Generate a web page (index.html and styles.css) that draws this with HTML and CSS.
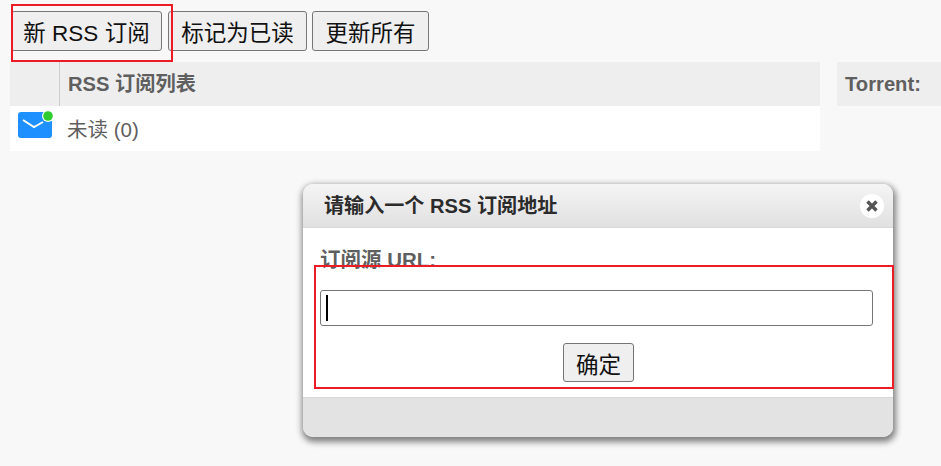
FILE: index.html
```html
<!DOCTYPE html>
<html lang="zh-CN">
<head>
    <meta charset="UTF-8">
    <title>RSS</title>
    <link rel="stylesheet" href="styles.css">
</head>
<body>
    <!-- Toolbar -->
    <div class="toolbar">
        <button class="btn btn-new">新 RSS 订阅</button>
        <button class="btn btn-read">标记为已读</button>
        <button class="btn btn-update">更新所有</button>
    </div>

    <div class="panes">
        <!-- Feed list -->
        <div class="feed-pane">
            <div class="feed-header">
                <div class="icon-col"></div>
                <div class="feed-title">RSS 订阅列表</div>
            </div>
            <div class="feed-row">
                <div class="icon-cell">
                    <svg class="mail-icon" width="36" height="28" viewBox="0 0 36 28">
                        <rect x="0" y="2" width="34" height="26" rx="3" fill="#1e90ff"/>
                        <path d="M5 10 L16 17 L25 12" fill="none" stroke="#fff" stroke-width="2"/>
                        <circle cx="30" cy="6" r="6" fill="#fff"/>
                        <circle cx="30" cy="6" r="4.800" fill="#2ecc2e"/>
                    </svg>
                </div>
                <div class="feed-name">未读 (0)</div>
            </div>
        </div>

        <!-- Torrent pane -->
        <div class="torrent-pane">
            <div class="torrent-header">Torrent:</div>
        </div>
    </div>

    <!-- Dialog -->
    <div class="dialog">
        <div class="dialog-head">
            <span class="dialog-title">请输入一个 RSS 订阅地址</span>
            <span class="dialog-close">
                <svg width="14" height="14" viewBox="0 0 14 14">
                    <path d="M2.500 2.500 L11.500 11.500 M11.500 2.500 L2.500 11.500" stroke="#555" stroke-width="3.400"/>
                </svg>
            </span>
        </div>
        <div class="dialog-body">
            <label class="url-label">订阅源 URL:</label>
            <div class="url-input"><span class="caret"></span></div>
            <div class="dialog-actions">
                <button class="btn btn-ok">确定</button>
            </div>
        </div>
        <div class="dialog-foot"></div>
    </div>

    <!-- Red annotation boxes -->
    <div class="mark mark-button"></div>
    <div class="mark mark-input"></div>
</body>
</html>
```

FILE: styles.css
```css
* {
    margin: 0;
    padding: 0;
    box-sizing: border-box;
}

body {
    width: 941px;
    height: 466px;
    overflow: hidden;
    position: relative;
    background-color: #f8f8f8;
    color: #5f5f5f;
    font-family: "Liberation Sans", "Noto Sans CJK SC", sans-serif;
}

.toolbar {
    display: flex;
    gap: 5px;
    padding: 11px 0 0 11px;
    height: 62px;
}

.btn {
    height: 40px;
    background-color: #efefef;
    border: 1px solid #767676;
    border-radius: 3px;
    color: #111;
    font-family: inherit;
    font-size: 22.500px;
}

.btn-new {
    width: 151px;
    margin-right: 1px;
}

.btn-read {
    width: 139px;
}

.btn-update {
    width: 117px;
}

.panes {
    display: flex;
    padding-left: 10px;
}

/* Feed list */
.feed-pane {
    width: 810px;
}

.feed-header {
    display: flex;
    height: 44px;
    background-color: #eeeeee;
}

.icon-col {
    width: 50px;
    border-right: 1px solid #cfcfcf;
}

.feed-title {
    padding-left: 8px;
    font-size: 20.200px;
    font-weight: bold;
    line-height: 44px;
}

.feed-row {
    display: flex;
    align-items: center;
    height: 45px;
    background-color: #fff;
}

.icon-cell {
    width: 50px;
    padding: 0 0 9px 8px;
}

.mail-icon {
    display: block;
}

.feed-name {
    padding: 0 0 2px 7px;
    font-size: 20.500px;
}

/* Torrent pane */
.torrent-pane {
    flex: 1;
    margin-left: 17px;
}

.torrent-header {
    height: 44px;
    padding-left: 8px;
    background-color: #eeeeee;
    font-size: 20.200px;
    font-weight: bold;
    line-height: 44px;
}

/* Dialog */
.dialog {
    position: absolute;
    left: 303px;
    top: 184px;
    display: flex;
    flex-direction: column;
    width: 590px;
    height: 253px;
    border-radius: 10px;
    box-shadow: 1px 3px 6px 2px #808080;
}

.dialog-head {
    display: flex;
    justify-content: space-between;
    align-items: center;
    height: 44px;
    padding: 0 9px 0 21px;
    border-radius: 10px 10px 0 0;
    background: linear-gradient(#f5f5f5, #e0e0e0);
    border-bottom: 1px solid #d8d8d8;
}

.dialog-title {
    padding-bottom: 2px;
    color: #2b2b2b;
    font-size: 20.100px;
    font-weight: bold;
}

.dialog-close {
    display: flex;
    align-items: center;
    justify-content: center;
    width: 24px;
    height: 24px;
    border-radius: 50%;
    background-color: #fff;
}

.dialog-close svg {
    display: block;
}

.dialog-body {
    flex: 1;
    padding: 19px 20px 0 17px;
    background-color: #fff;
}

.url-label {
    display: block;
    height: 43px;
    font-size: 20.500px;
    font-weight: bold;
    line-height: 26px;
}

.url-input {
    display: flex;
    align-items: center;
    height: 36px;
    padding-left: 5px;
    background-color: #fff;
    border: 1px solid #767676;
    border-radius: 3px;
}

.caret {
    width: 2px;
    height: 26px;
    background-color: #000;
}

.dialog-actions {
    display: flex;
    justify-content: center;
    margin-top: 17px;
    padding-left: 4px;
}

.btn-ok {
    width: 71px;
    height: 39px;
}

.dialog-foot {
    height: 40px;
    border-radius: 0 0 10px 10px;
    background-color: #e3e3e3;
    border-top: 1px solid #d6d6d6;
}

/* Annotations */
.mark {
    position: absolute;
    border: 2px solid #ed1c24;
}

.mark-button {
    left: 11px;
    top: 4px;
    width: 162px;
    height: 58px;
}

.mark-input {
    left: 314px;
    top: 265px;
    width: 580px;
    height: 124px;
}
```
